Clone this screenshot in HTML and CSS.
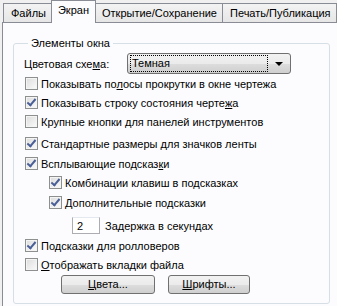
FILE: index.html
```html
<!DOCTYPE html>
<html lang="ru">
<head>
    <meta charset="UTF-8">
    <title>Экран</title>
    <link rel="stylesheet" href="styles.css">
</head>
<body>

    <div class="tabs">
        <div class="tab">Файлы</div>
        <div class="tab active">Экран</div>
        <div class="tab">Открытие/Сохранение</div>
        <div class="tab">Печать/Публикация</div>
        <div class="tab">С</div>
    </div>

    <div class="panel">
        <fieldset class="group">
            <legend>Элементы окна</legend>

            <div class="row scheme">
                <span class="label">Цветовая схе<u>м</u>а:</span>
                <div class="select">
                    <span class="focus">Темная</span>
                    <span class="arrow"></span>
                </div>
            </div>

            <div class="row"><span class="cb"></span>Показывать по<u>л</u>осы прокрутки в окне чертежа</div>
            <div class="row"><span class="cb on"></span>Показывать строку состояния черте<u>ж</u>а</div>
            <div class="row"><span class="cb"></span>Крупные кнопки для панелей инструментов</div>
            <div class="row gap"><span class="cb on"></span>Стандартные размеры для значков ленты</div>
            <div class="row m1"><span class="cb on"></span>Всплывающие подсказ<u>к</u>и</div>
            <div class="row sub"><span class="cb on"></span>Комбинации клавиш в подсказках</div>
            <div class="row sub m1"><span class="cb on"></span>Дополнительные подсказки</div>
            <div class="row spin-row">
                <span class="spin">2</span>
                Задержка в секундах
            </div>
            <div class="row"><span class="cb on"></span>Подсказки для ролловеров</div>
            <div class="row"><span class="cb"></span><u>О</u>тображать вкладки файла</div>

            <div class="buttons">
                <div class="btn"><u>Ц</u>вета...</div>
                <div class="btn"><u>Ш</u>рифты...</div>
            </div>
        </fieldset>
    </div>

</body>
</html>
```

FILE: styles.css
```css
body {
    margin: 0;
    width: 337px;
    height: 306px;
    overflow: hidden;
    background-color: #f0f0f0;
    font-family: 'Liberation Sans', Arial, sans-serif;
    font-size: 11px;
    color: #000;
}

u {
    text-decoration: underline;
    text-underline-offset: 1px;
}

.tabs {
    display: flex;
    align-items: flex-end;
    height: 22px;
    padding-left: 3px;
    white-space: nowrap;
    position: relative;
    z-index: 1;
}

.tab {
    height: 18px;
    line-height: 18px;
    padding: 0 5px 0 7px;
    border: 1px solid #898c95;
    border-bottom: none;
    border-right: none;
    background: linear-gradient(#f3f3f3, #e6e6e6);
    box-sizing: content-box;
}

.tab:nth-child(4) {
    border-right: 1px solid #898c95;
}

.tab:last-child {
    margin-left: 1px;
    color: #b86a2a;
}

.tab.active {
    height: 21px;
    line-height: 19px;
    padding: 0 6px 1px 6px;
    margin: 0 -2px 0 0;
    background: #fcfcfe;
    border-right: 1px solid #898c95;
    position: relative;
    top: 1px;
}

.panel {
    margin-left: 2px;
    height: 285px;
    background-color: #fcfcfe;
    border: 1px solid #898c95;
    border-right: none;
    border-bottom: none;
    box-sizing: border-box;
    padding: 13px 0 0 10px;
}

.group {
    width: 317px;
    height: 268px;
    margin: 0;
    padding: 3px 0 0 10px;
    border: 1px solid #d5dfe5;
    border-radius: 3px;
    box-sizing: border-box;
}

.group legend {
    padding: 0 3px;
    margin-left: 4px;
    line-height: 14px;
}

.row {
    display: flex;
    align-items: center;
    height: 19px;
    white-space: nowrap;
}

.row.gap {
    margin-top: 3px;
}

.row.m1 {
    margin-top: 1px;
}

.row.sub {
    padding-left: 24px;
}

.scheme {
    height: 21px;
}

.scheme .label {
    width: 103px;
}

.select {
    width: 158px;
    height: 19px;
    border: 1px solid #707070;
    border-radius: 3px;
    background: linear-gradient(#f2f2f2 0%, #ebebeb 50%, #dddddd 51%, #cfcfcf 100%);
    display: flex;
    align-items: center;
    padding: 0 2px;
    box-sizing: content-box;
}

.select .focus {
    flex: 1;
    height: 15px;
    line-height: 15px;
    padding-left: 1px;
    border: 1px dotted #000;
    margin-right: 7px;
}

.select .arrow {
    width: 0;
    height: 0;
    border-left: 4px solid transparent;
    border-right: 4px solid transparent;
    border-top: 4px solid #000;
    margin-right: 5px;
}

.cb {
    width: 11px;
    height: 11px;
    border: 1px solid #8e8f8f;
    background: linear-gradient(135deg, #dcdcdc, #fbfbfb);
    box-shadow: inset 0 0 0 1px #f4f4f4;
    margin: 0 3px 0 1px;
    position: relative;
    flex: none;
}

.cb.on::after {
    content: "";
    position: absolute;
    left: 3px;
    top: 0px;
    width: 3px;
    height: 7px;
    border: solid #4a5f97;
    border-width: 0 2px 2px 0;
    transform: rotate(40deg);
}

.spin-row {
    height: 21px;
    padding-left: 48px;
    margin-top: 3px;
}

.spin {
    width: 22px;
    height: 15px;
    line-height: 17px;
    padding-left: 4px;
    border: 1px solid #abadb3;
    border-top-color: #e3e9ef;
    background: #fff;
    margin-right: 5px;
    overflow: hidden;
}

.buttons {
    display: flex;
    gap: 13px;
    padding-left: 37px;
    margin-top: 1px;
}

.btn {
    height: 17px;
    line-height: 17px;
    width: 92px;
    text-align: center;
    border: 1px solid #707070;
    border-radius: 3px;
    background: linear-gradient(#f2f2f2 0%, #ebebeb 50%, #dddddd 51%, #cfcfcf 100%);
}

.btn:last-child {
    width: 80px;
}
```
